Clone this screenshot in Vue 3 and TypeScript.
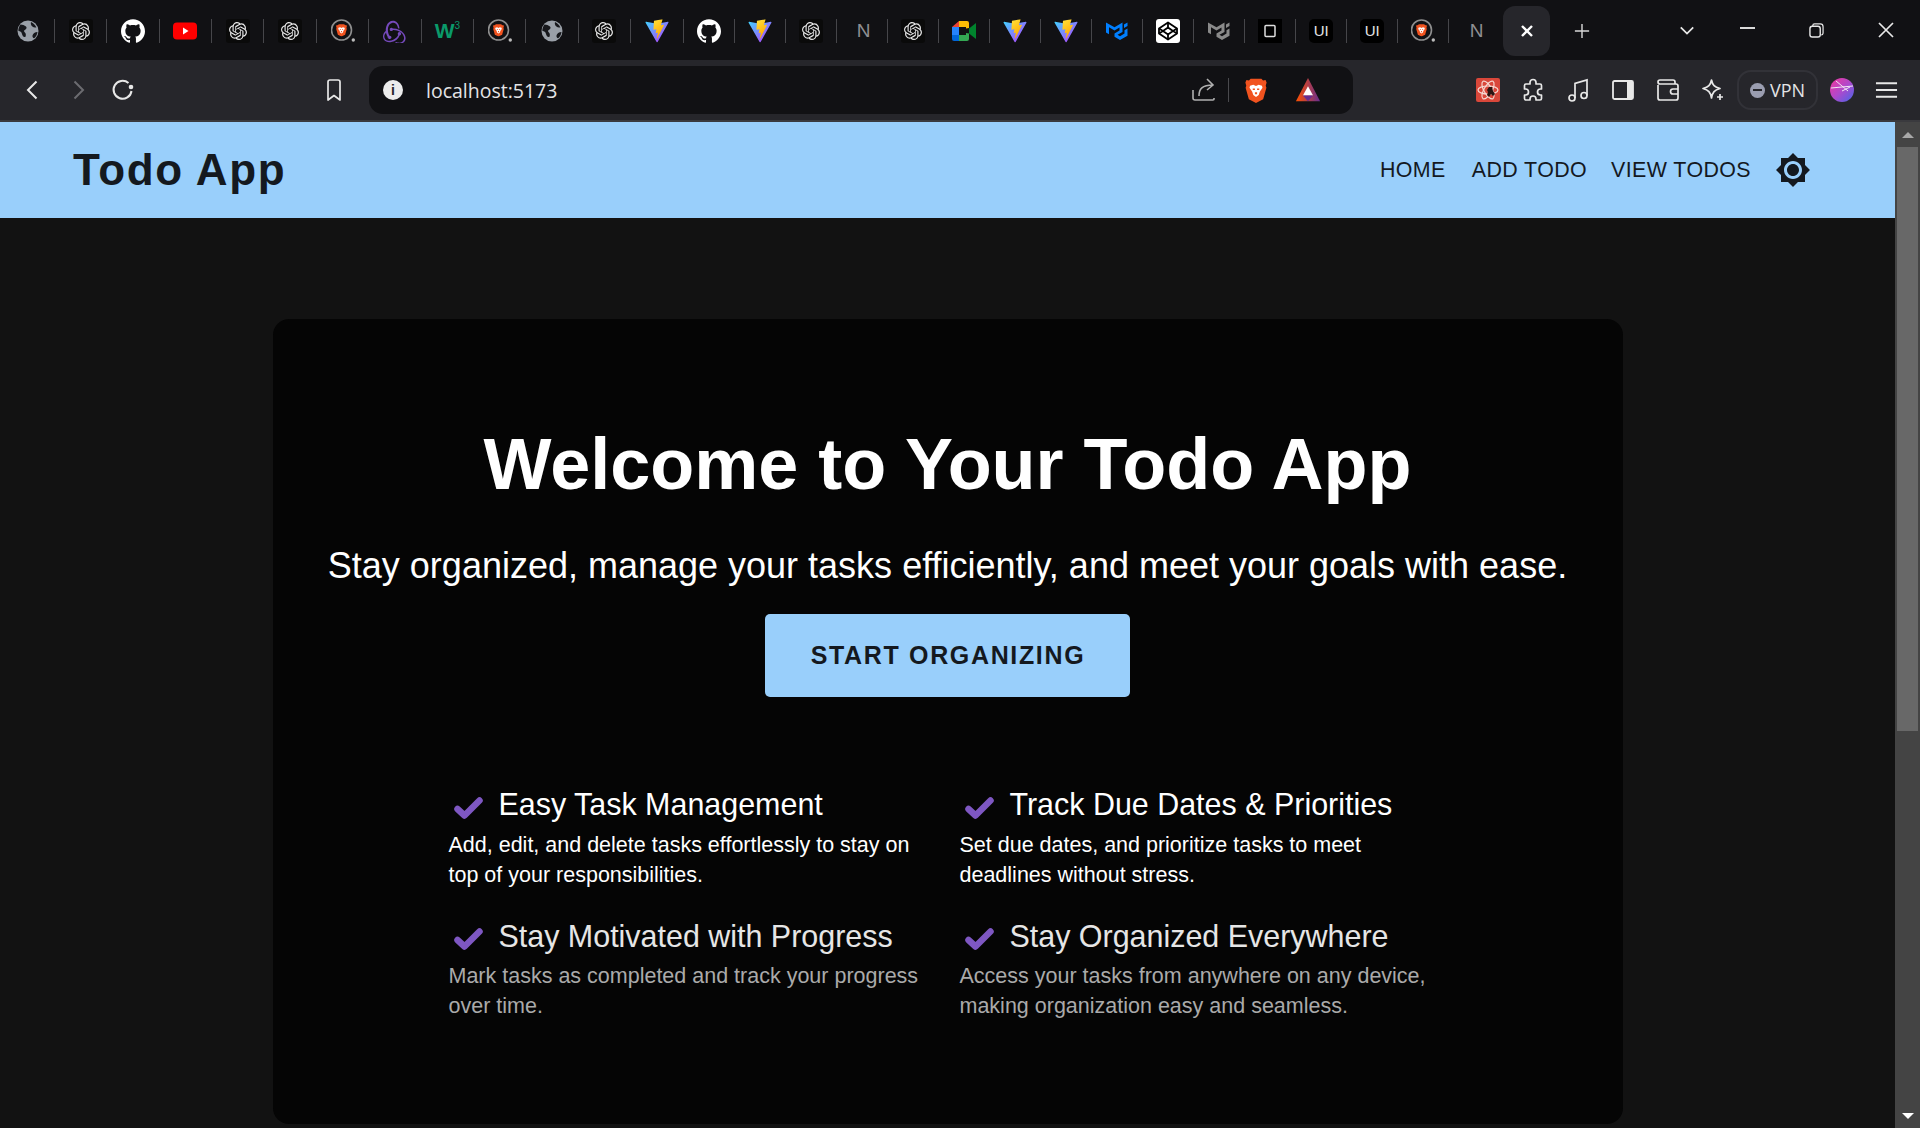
<script setup lang="ts">
type Tab = { kind: string; label?: string };

const icon = (kind: string): Tab => ({ kind });
const text = (label: string, kind = 'label'): Tab => ({ kind, label });

const tabs: Tab[] = [
  icon('globe'), icon('openai'), icon('github'), icon('youtube'), icon('openai'), icon('openai'),
  icon('brave-ring'), icon('redux'), text('W', 'w3'), icon('brave-ring'), icon('globe'), icon('openai'),
  icon('vite'), icon('github'), icon('vite'), icon('openai'), text('N'), icon('openai'),
  icon('meet'), icon('vite'), icon('vite'), icon('mui'), icon('box'), icon('mui-grey'),
  icon('square'), text('UI', 'ui'), text('UI', 'ui'), icon('brave-ring'), text('N'),
];

const navLinks = ['Home', 'Add Todo', 'View Todos'];

const features = [
  { title: 'Easy Task Management', desc: 'Add, edit, and delete tasks effortlessly to stay on top of your responsibilities.', dim: false },
  { title: 'Track Due Dates & Priorities', desc: 'Set due dates, and prioritize tasks to meet deadlines without stress.', dim: false },
  { title: 'Stay Motivated with Progress', desc: 'Mark tasks as completed and track your progress over time.', dim: true },
  { title: 'Stay Organized Everywhere', desc: 'Access your tasks from anywhere on any device, making organization easy and seamless.', dim: true },
];

const openaiPath = 'M22.2819 9.8211a5.9847 5.9847 0 0 0-.5157-4.9108 6.0462 6.0462 0 0 0-6.5098-2.9A6.0651 6.0651 0 0 0 4.9807 4.1818a5.9847 5.9847 0 0 0-3.9977 2.9 6.0462 6.0462 0 0 0 .7427 7.0966 5.98 5.98 0 0 0 .511 4.9107 6.051 6.051 0 0 0 6.5146 2.9001A5.9847 5.9847 0 0 0 13.2599 24a6.0557 6.0557 0 0 0 5.7718-4.2058 5.9894 5.9894 0 0 0 3.9977-2.9001 6.0557 6.0557 0 0 0-.7475-7.0729zm-9.022 12.6081a4.4755 4.4755 0 0 1-2.8764-1.0408l.1419-.0804 4.7783-2.7582a.7948.7948 0 0 0 .3927-.6813v-6.7369l2.02 1.1686a.071.071 0 0 1 .038.052v5.5826a4.504 4.504 0 0 1-4.4945 4.4944zm-9.6607-4.1254a4.4708 4.4708 0 0 1-.5346-3.0137l.142.0852 4.783 2.7582a.7712.7712 0 0 0 .7806 0l5.8428-3.3685v2.3324a.0804.0804 0 0 1-.0332.0615L9.74 19.9502a4.4992 4.4992 0 0 1-6.1408-1.6464zM2.3408 7.8956a4.485 4.485 0 0 1 2.3655-1.9728V11.6a.7664.7664 0 0 0 .3879.6765l5.8144 3.3543-2.0201 1.1685a.0757.0757 0 0 1-.071 0l-4.8303-2.7865A4.504 4.504 0 0 1 2.3408 7.872zm16.5963 3.8558L13.1038 8.364 15.1192 7.2a.0757.0757 0 0 1 .071 0l4.8303 2.7913a4.4944 4.4944 0 0 1-.6765 8.1042v-5.6772a.79.79 0 0 0-.407-.667zm2.0107-3.0231l-.142-.0852-4.7735-2.7818a.7759.7759 0 0 0-.7854 0L9.409 9.2297V6.8974a.0662.0662 0 0 1 .0284-.0615l4.8303-2.7866a4.4992 4.4992 0 0 1 6.6802 4.66zM8.3065 12.863l-2.02-1.1638a.0804.0804 0 0 1-.038-.0567V6.0742a4.4992 4.4992 0 0 1 7.3757-3.4537l-.142.0805L8.704 5.459a.7948.7948 0 0 0-.3927.6813zm1.0976-2.3654l2.602-1.4998 2.6069 1.4998v2.9994l-2.5974 1.4997-2.6067-1.4997Z';
const githubPath = 'M12 .297c-6.63 0-12 5.373-12 12 0 5.303 3.438 9.8 8.205 11.385.6.113.82-.258.82-.577 0-.285-.01-1.04-.015-2.04-3.338.724-4.042-1.61-4.042-1.61C4.422 18.07 3.633 17.7 3.633 17.7c-1.087-.744.084-.729.084-.729 1.205.084 1.838 1.236 1.838 1.236 1.07 1.835 2.809 1.305 3.495.998.108-.776.417-1.305.76-1.605-2.665-.3-5.466-1.332-5.466-5.93 0-1.31.465-2.38 1.235-3.22-.135-.303-.54-1.523.105-3.176 0 0 1.005-.322 3.3 1.23.96-.267 1.98-.399 3-.405 1.02.006 2.04.138 3 .405 2.28-1.552 3.285-1.23 3.285-1.23.645 1.653.24 2.873.12 3.176.765.84 1.23 1.91 1.23 3.22 0 4.61-2.805 5.625-5.475 5.92.42.36.81 1.096.81 2.22 0 1.606-.015 2.896-.03 3.286 0 .315.21.69.825.57C20.565 22.092 24 17.592 24 12.297c0-6.627-5.373-12-12-12';
const sunPath = 'M20 8.69V4h-4.69L12 .69 8.69 4H4v4.69L.69 12 4 15.31V20h4.69L12 23.31 15.31 20H20v-4.69L23.31 12 20 8.69zM12 18c-3.31 0-6-2.69-6-6s2.69-6 6-6 6 2.69 6 6-2.69 6-6 6zm0-10c-2.21 0-4 1.79-4 4s1.79 4 4 4 4-1.79 4-4-1.79-4-4-4z';
</script>

<template>
  <div class="window">
    <svg class="defs" aria-hidden="true">
      <defs>
        <linearGradient id="viteBody" x1="0" y1="0" x2="1" y2="1">
          <stop offset="0" stop-color="#41d1ff" />
          <stop offset="1" stop-color="#bd34fe" />
        </linearGradient>
        <linearGradient id="viteBolt" x1="0" y1="0" x2=".4" y2="1">
          <stop offset="0" stop-color="#ffea83" />
          <stop offset=".1" stop-color="#ffdd35" />
          <stop offset="1" stop-color="#ffa800" />
        </linearGradient>
        <linearGradient id="batBody" x1="0" y1="1" x2="1" y2="1">
          <stop offset="0" stop-color="#ff5000" />
          <stop offset="1" stop-color="#662d91" />
        </linearGradient>
        <linearGradient id="avatarBody" x1="0" y1="0" x2="1" y2="1">
          <stop offset="0" stop-color="#f2369a" />
          <stop offset=".5" stop-color="#b048cc" />
          <stop offset="1" stop-color="#4466e8" />
        </linearGradient>
        <symbol id="i-globe" viewBox="0 0 24 24">
          <circle cx="12" cy="12" r="10.5" fill="#9aa0a8" />
          <path d="M4.500 5.500c2 .3 4 .6 5.500 2 1.200 1.200 .4 2.600-.8 3.200-1.500 .6-1.400 2-.3 2.800 1 .8 1.200 2.400 .6 4.200-1.400 1.200-3-.6-3.600-3-.4-1.800-1.600-2.600-3.600-3 .1-2.400 1-4.600 2.200-6.200z" fill="#17181c" />
          <path d="M15 3c2.400 1 4.400 3 5.400 5.400-1.400 .4-3 .2-4-.8-1.200-1.200-2-2.800-1.400-4.600zM21.500 13c-.3 2.500-1.500 4.600-3.300 6.200-1.200-.3-2-1.400-1.700-2.800 .3-1.600 2.500-3.400 5-3.400z" fill="#17181c" />
        </symbol>
        <symbol id="i-lion" viewBox="0 0 24 24">
          <path d="M7 1.500h10l1.500 1.700 2.300-.5 1 2.300-.8 3 .6 2-3 10.500-6.600 3.500-6.600-3.500-3-10.500 .6-2-.8-3 1-2.300 2.300 .5z" fill="#f1531f" />
          <path d="M6.500 8l3-.8 2.500 1 2.500-1 3 .8 .5 2-2.500 3.500-1 3-2.500 2-2.500-2-1-3-2.500-3.500z" fill="#fff" />
          <path d="M9 10.500h2v1.500H9zM13 10.500h2v1.500h-2zM11 14h2v2h-2z" fill="#f1531f" />
        </symbol>
        <symbol id="i-vite" viewBox="0 0 410 404">
          <path d="M399.641 59.5246L215.643 388.545C211.844 395.338 202.084 395.378 198.228 388.618L10.5817 59.5563C6.38087 52.1896 12.6802 43.2665 21.0281 44.7586L205.223 77.6824C206.398 77.8924 207.601 77.8904 208.776 77.6763L389.119 44.8058C397.439 43.2894 403.768 52.1434 399.641 59.5246Z" fill="url(#viteBody)" />
          <path d="M292.965 1.5744L156.801 28.2552C154.563 28.6937 152.906 30.5903 152.771 32.8664L144.395 174.33C144.198 177.662 147.258 180.248 150.51 179.498L188.42 170.749C191.967 169.931 195.172 173.055 194.443 176.622L183.18 231.775C182.422 235.487 185.907 238.661 189.532 237.56L212.947 230.446C216.577 229.344 220.065 232.527 219.297 236.242L201.398 322.875C200.278 328.294 207.486 331.249 210.492 326.603L212.5 323.5L323.454 102.072C325.312 98.3645 322.108 94.1362 318.036 94.9221L279.014 102.454C275.347 103.161 272.227 99.746 273.262 96.1583L298.731 7.86689C299.767 4.27314 296.636 0.855181 292.965 1.5744Z" fill="url(#viteBolt)" />
        </symbol>
        <symbol id="i-redux" viewBox="0 0 24 24">
          <path d="M16.634 16.504c.87-.075 1.543-.84 1.5-1.754-.047-.914-.796-1.648-1.709-1.648h-.061a1.71 1.71 0 00-1.648 1.769c.03.479.226.869.494 1.153-1.048 2.038-2.621 3.536-5.005 4.795-1.603.838-3.296 1.154-4.944.93-1.378-.195-2.456-.81-3.116-1.799-.988-1.499-1.078-3.116-.255-4.734.6-1.17 1.499-2.023 2.099-2.443a9.96 9.96 0 01-.42-1.543C-.868 14.408-.416 18.752.947 20.805c1.019 1.543 3.146 2.517 5.494 2.517.629 0 1.273-.06 1.903-.21 4.059-.779 7.135-3.326 8.29-6.608zm3.746-2.622c-2.412-2.845-5.973-4.404-10.03-4.404h-.51c-.3-.479-.84-.81-1.41-.81h-.06c-.94 0-1.68.81-1.65 1.769.03.9.81 1.65 1.71 1.65h.06a1.72 1.72 0 001.5-1.051h.569c2.411 0 4.704.689 6.767 2.068 1.573 1.05 2.712 2.428 3.342 4.106.54 1.35.51 2.67-.06 3.79-.9 1.71-2.4 2.65-4.378 2.65-1.26 0-2.47-.39-3.09-.66-.36.3-.96.81-1.38 1.11 1.37.63 2.77 1 4.11 1 3.06 0 5.33-1.7 6.19-3.4.93-1.86.87-5.04-1.68-7.82zM5.08 18.38c.03.9.81 1.65 1.71 1.65h.06c.93-.03 1.65-.81 1.62-1.74-.03-.9-.81-1.65-1.71-1.65h-.06c-.06 0-.15 0-.21.03-1.23-2.04-1.74-4.26-1.56-6.66.12-1.8.72-3.36 1.77-4.65.87-1.11 2.55-1.65 3.69-1.68 3.18-.06 4.53 3.9 4.62 5.49.39.09 1.05.3 1.5.45C16.14 4.29 13 1.8 9.97 1.8c-2.85 0-5.46 2.07-6.51 5.1-1.47 4.05-.51 7.95 1.29 11.04-.15.21-.24.54-.21.84z" fill="#764abc" />
        </symbol>
        <symbol id="i-mui" viewBox="0 0 24 24">
          <path d="M1 3.500v10l3 1.800V8.200l5.500 3.200 5-3v3.200l-5 3v3.200l5.500 3.200 7.500-4.300V9.600l-3 1.700v3.300l-4.500 2.600-2.500-1.400 5-2.900V3.500l-8 4.700z" fill="currentColor" />
          <path d="M19 5.500v3.400l3.500-2V3.500z" fill="currentColor" />
        </symbol>
      </defs>
    </svg>

    <div class="tabstrip">
      <div v-for="(tab, i) in tabs" :key="i" class="tab" :class="{ first: i < 12, bridge: i === 12 }">
        <span class="tab-icon">
          <span v-if="tab.kind === 'label'" class="tab-n">{{ tab.label }}</span>
          <span v-else-if="tab.kind === 'ui'" class="tab-ui">{{ tab.label }}</span>
          <span v-else-if="tab.kind === 'w3'" class="tab-w3">{{ tab.label }}<sup>3</sup></span>
          <svg v-else-if="tab.kind === 'globe'" viewBox="0 0 24 24"><use href="#i-globe" /></svg>
          <svg v-else-if="tab.kind === 'openai'" class="ai" viewBox="-4 -4 32 32"><path :d="openaiPath" fill="#e6e6e6" /></svg>
          <svg v-else-if="tab.kind === 'github'" viewBox="0 0 24 24"><path :d="githubPath" fill="#fff" /></svg>
          <svg v-else-if="tab.kind === 'youtube'" viewBox="0 0 24 24">
            <rect x="0" y="3.500" width="24" height="17" rx="4" fill="#f00" />
            <path d="M10 8.500v7l5.500-3.500z" fill="#fff" />
          </svg>
          <svg v-else-if="tab.kind === 'brave-ring'" viewBox="0 0 24 24">
            <circle cx="10.500" cy="11" r="10" fill="none" stroke="#8f8f8f" stroke-width="1.600" />
            <g transform="translate(3.900 4.400) scale(.55)"><use href="#i-lion" width="24" height="24" /></g>
            <circle cx="22.300" cy="21" r="1.700" fill="#bbb" />
          </svg>
          <svg v-else-if="tab.kind === 'redux'" viewBox="0 0 24 24"><use href="#i-redux" /></svg>
          <svg v-else-if="tab.kind === 'vite'" viewBox="0 0 410 404"><use href="#i-vite" /></svg>
          <svg v-else-if="tab.kind === 'meet'" viewBox="0 0 24 24">
            <path d="M0 8 7 2v6z" fill="#ea4335" />
            <path d="M7 2h8a2 2 0 0 1 2 2v5l-3 .5V8H7z" fill="#fbbc05" />
            <path d="M0 8h7v8H0z" fill="#2684fc" />
            <path d="M0 16h7v6H2a2 2 0 0 1-2-2z" fill="#0066da" />
            <path d="M7 16h7v-2l3 .5V20a2 2 0 0 1-2 2H7z" fill="#34a853" />
            <path d="M17 9.500 24 4v16l-7-5.500z" fill="#00832d" />
          </svg>
          <svg v-else-if="tab.kind === 'mui'" class="mui" viewBox="0 0 24 24"><use href="#i-mui" /></svg>
          <svg v-else-if="tab.kind === 'mui-grey'" class="mui grey" viewBox="0 0 24 24"><use href="#i-mui" /></svg>
          <svg v-else-if="tab.kind === 'box'" viewBox="0 0 24 24">
            <rect width="24" height="24" rx="3" fill="#fff" />
            <g fill="none" stroke="#000" stroke-width="1.800" stroke-linejoin="round">
              <path d="M12 3.500 21 9.500v5L12 20.500 3 14.500v-5z" />
              <path d="M12 8.500 17 12l-5 3.500L7 12z" />
              <path d="M12 3.500v5M12 15.500v5M3 9.500 7 12M21 9.500 17 12M3 14.500 7 12M21 14.500 17 12" />
            </g>
          </svg>
          <svg v-else-if="tab.kind === 'square'" viewBox="0 0 24 24">
            <rect width="24" height="24" fill="#000" />
            <rect x="7" y="6.500" width="10" height="11" rx="1" fill="none" stroke="#ddd" stroke-width="1.500" />
          </svg>
        </span>
      </div>
      <div class="tab-active">
        <svg viewBox="0 0 14 14" class="close-x"><path d="M2 2l10 10M12 2 2 12" stroke="#fff" stroke-width="2.400" /></svg>
      </div>
      <svg class="new-tab" viewBox="0 0 18 18"><path d="M9 1v16M1 9h16" stroke="#d8d8d8" stroke-width="1.600" /></svg>
      <div class="window-controls">
        <svg class="wc chevron" viewBox="0 0 18 12"><path d="M2 2.500l7 7 7-7" fill="none" stroke="#e8e8e8" stroke-width="2" /></svg>
        <svg class="wc minimize" viewBox="0 0 16 4"><path d="M0 2h16" stroke="#e8e8e8" stroke-width="2" /></svg>
        <svg class="wc restore" viewBox="0 0 16 16"><path d="M4 3.500V3a2 2 0 0 1 2-2h6a3 3 0 0 1 3 3v7a2 2 0 0 1-2 1.800" fill="none" stroke="#e8e8e8" stroke-width="1.300" /><rect x="1" y="3.500" width="11" height="11.500" rx="2.500" fill="none" stroke="#e8e8e8" stroke-width="1.500" /></svg>
        <svg class="wc closer" viewBox="0 0 16 16"><path d="M1 1l14 14M15 1 1 15" stroke="#e8e8e8" stroke-width="1.700" /></svg>
      </div>
    </div>

    <div class="toolbar">
      <svg class="tb back" viewBox="0 0 24 24"><path d="M15.500 3.500 7 12l8.500 8.500" fill="none" stroke="#e8e8e8" stroke-width="2" /></svg>
      <svg class="tb forward" viewBox="0 0 24 24"><path d="M8.500 3.500 17 12l-8.500 8.500" fill="none" stroke="#6b6b70" stroke-width="2" /></svg>
      <svg class="tb reload" viewBox="0 0 24 24"><path d="M20.500 13a9 9 0 1 1-3-8" fill="none" stroke="#e8e8e8" stroke-width="2" /><circle cx="20" cy="9" r="2.300" fill="#e8e8e8" /></svg>
      <svg class="tb bookmark" viewBox="0 0 24 24"><path d="M6 4a2 2 0 0 1 2-2h8a2 2 0 0 1 2 2v18l-6-4.500L6 22z" fill="none" stroke="#e8e8e8" stroke-width="1.700" stroke-linejoin="round" /></svg>
      <div class="omnibox">
        <span class="info">i</span>
        <span class="url">localhost:5173</span>
        <svg class="omni-ic share" viewBox="0 0 24 24"><path d="M2 12v8a2 2 0 0 0 2 2h18a1 1 0 0 0 1-1v-1M8 18c0-7 3-11 14-11M16 1l6 6-6 5" fill="none" stroke="#b0b0b0" stroke-width="1.600" /></svg>
        <span class="omni-div"></span>
        <svg class="omni-ic lion" viewBox="0 0 24 24"><use href="#i-lion" /></svg>
        <svg class="omni-ic bat" viewBox="0 0 28 28">
          <path d="M14 1 27 26H1z" fill="url(#batBody)" />
          <path d="M14 10l5.500 10h-11z" fill="#fff" />
          <path d="M8.500 20h11L14 26z" fill="#662d91" />
        </svg>
      </div>
      <div class="ext-row">
        <span class="ext-btn">
          <svg viewBox="0 0 24 24">
            <rect width="24" height="24" rx="2" fill="#d9473a" />
            <g fill="none" stroke="#f6d9d2" stroke-width="1.200">
              <ellipse cx="12" cy="12" rx="10" ry="4" />
              <ellipse cx="12" cy="12" rx="10" ry="4" transform="rotate(60 12 12)" />
              <ellipse cx="12" cy="12" rx="10" ry="4" transform="rotate(120 12 12)" />
            </g>
            <path d="M13 9h3l1 4 2 3-2 2-2-2-2 3-2-2 1-3-1-2z" fill="#2b1512" />
          </svg>
        </span>
        <span class="ext-btn">
          <svg viewBox="0 0 24 24"><path d="M9 4.500a3 3 0 0 1 6 0V6h4a1.500 1.500 0 0 1 1.500 1.500V11h-1a3 3 0 0 0 0 6h1v3.500A1.500 1.500 0 0 1 19 22h-4v-1a3 3 0 0 0-6 0v1H5a1.500 1.500 0 0 1-1.500-1.500V17h1a3 3 0 0 0 0-6h-1V7.500A1.500 1.500 0 0 1 5 6h4z" fill="none" stroke="#e8e8e8" stroke-width="1.700" stroke-linejoin="round" /></svg>
        </span>
        <span class="ext-btn">
          <svg viewBox="0 0 24 24"><g fill="none" stroke="#e8e8e8" stroke-width="1.700"><circle cx="6" cy="20" r="3" /><circle cx="18" cy="17.500" r="3" /><path d="M9 20V5.500L21 2v15.500" /></g></svg>
        </span>
        <span class="ext-btn">
          <svg viewBox="0 0 24 24"><rect x="2" y="3" width="20" height="18" rx="1.500" fill="none" stroke="#e8e8e8" stroke-width="1.800" /><rect x="16" y="3" width="6" height="18" fill="#e8e8e8" /></svg>
        </span>
        <span class="ext-btn">
          <svg viewBox="0 0 24 24"><g fill="none" stroke="#e8e8e8" stroke-width="1.700"><path d="M2 7v13a2 2 0 0 0 2 2h16a2 2 0 0 0 2-2V8a2 2 0 0 0-2-2H4a2 2 0 0 1-2-2 2 2 0 0 1 2-2h13a2 2 0 0 1 2 2v2" /><path d="M22 11h-5a2.500 2.500 0 0 0 0 5h5" /></g></svg>
        </span>
        <span class="ext-btn">
          <svg viewBox="0 0 24 24"><path d="M10.500 2c1 5 3 7 8.500 8.500-5.500 1.500-7.500 3.500-8.500 9.500-1-6-3-8-8.500-9.500C7.500 9 9.500 7 10.500 2z" fill="none" stroke="#e8e8e8" stroke-width="1.700" stroke-linejoin="round" /><path d="M19 16v6M16 19h6" stroke="#e8e8e8" stroke-width="1.700" /></svg>
        </span>
      </div>
      <div class="vpn"><span class="vpn-dot"><i></i></span>VPN</div>
      <svg class="avatar" viewBox="0 0 24 24">
        <circle cx="12" cy="12" r="12" fill="url(#avatarBody)" />
        <path d="M1 10l22-2M6 3l12 10M20 9l-8 4" stroke="#f3e6f5" stroke-width="1" fill="none" />
      </svg>
      <svg class="menu" viewBox="0 0 24 20"><path d="M1 3h22M1 10h22M1 17h22" stroke="#e8e8e8" stroke-width="2" /></svg>
    </div>
    <div class="chrome-line"></div>

    <div class="viewport">
      <main class="page">
        <header class="app-bar">
          <div class="logo">Todo App</div>
          <nav class="nav">
            <a v-for="link in navLinks" :key="link" class="nav-link">{{ link }}</a>
            <svg class="sun" viewBox="0 0 24 24"><path :d="sunPath" fill="#14191f" /></svg>
          </nav>
        </header>
        <section class="hero">
          <h1 class="hero-title">Welcome to Your Todo App</h1>
          <p class="hero-sub">Stay organized, manage your tasks efficiently, and meet your goals with ease.</p>
          <button class="cta" type="button">Start Organizing</button>
          <div class="features">
            <div v-for="f in features" :key="f.title" class="feature" :class="{ dim: f.dim }">
              <div class="feature-head">
                <svg class="check" viewBox="0 0 29 22"><path d="M3.500 12 10.500 18.500 25.500 3.500" fill="none" stroke="#7e57c2" stroke-width="6.500" stroke-linecap="round" stroke-linejoin="round" /></svg>
                <span class="feature-title">{{ f.title }}</span>
              </div>
              <p class="feature-desc">{{ f.desc }}</p>
            </div>
          </div>
        </section>
      </main>
      <aside class="scrollbar">
        <span class="arrow up"></span>
        <span class="thumb"></span>
        <span class="arrow down"></span>
      </aside>
    </div>
  </div>
</template>

<style>
html, body { margin: 0; background: #121212; }
</style>

<style scoped>
.window {
  width: 1920px;
  height: 1128px;
  display: flex;
  flex-direction: column;
  overflow: hidden;
  background: #121212;
  font-family: "Liberation Sans", Arial, sans-serif;
}
.defs { width: 0; height: 0; position: absolute; }

.tabstrip {
  height: 60px;
  flex: none;
  display: flex;
  align-items: center;
  padding-left: 2.500px;
  background: #111114;
}
.tab {
  width: 51px;
  height: 24px;
  flex: none;
  box-sizing: border-box;
  border-right: 1px solid #46464a;
  display: flex;
  align-items: center;
  justify-content: center;
  margin-top: 2px;
}
.tab.first { width: 52.400px; }
.tab.bridge { width: 53px; }
.tab:nth-child(29) { border-right: none; width: 52px; }
.tab-icon {
  width: 24px;
  height: 24px;
  display: flex;
  align-items: center;
  justify-content: center;
}
.tab-icon svg { width: 24px; height: 24px; display: block; }
.tab-icon svg.ai { background: #0a0a0a; border-radius: 3px; }
.tab-icon svg.mui { color: #007fff; }
.tab-icon svg.mui.grey { color: #8a8a8a; }
.tab-n {
  color: #8f8f92;
  font-size: 19px;
  width: 14px;
  margin-left: 3px;
  overflow: hidden;
  font-family: "Liberation Sans", sans-serif;
}
.tab-ui {
  width: 24px;
  height: 24px;
  background: #000;
  border-radius: 5px;
  color: #e4e4e4;
  font-size: 15px;
  line-height: 24px;
  text-align: center;
}
.tab-w3 { color: #0a9a6a; font-weight: 700; font-size: 21px; line-height: 24px; letter-spacing: -1px; white-space: nowrap; }
.tab-w3 sup { font-size: 10px; font-weight: 400; vertical-align: 9px; line-height: 0; letter-spacing: 0; margin-left: 1px; }
.tab-active {
  width: 47px;
  height: 50px;
  flex: none;
  margin: 2px 0 0 2px;
  border-radius: 12px;
  background: #26262b;
  display: flex;
  align-items: center;
  justify-content: center;
}
.close-x { width: 14px; height: 14px; }
.new-tab { width: 16px; height: 16px; margin-left: 24px; flex: none; margin-top: 2px; }
.window-controls { flex: 1; display: flex; align-items: center; }
.wc { flex: none; }
.chevron { width: 16px; height: 11px; margin-left: 89px; }
.minimize { width: 15px; height: 4px; margin-left: 45px; margin-top: -4px; }
.restore { width: 15px; height: 15px; margin-left: 54px; }
.closer { width: 16px; height: 16px; margin-left: 54px; }

.toolbar {
  height: 60px;
  flex: none;
  display: flex;
  align-items: center;
  background: #26262b;
}
.tb { flex: none; }
.back { width: 24px; height: 24px; margin-left: 21px; }
.forward { width: 24px; height: 24px; margin-left: 21px; }
.reload { width: 24px; height: 24px; margin-left: 21px; }
.bookmark { width: 24px; height: 24px; margin-left: 187px; }
.omnibox {
  width: 984px;
  height: 48px;
  margin-left: 23px;
  flex: none;
  border-radius: 14px;
  background: #111114;
  display: flex;
  align-items: center;
  padding-left: 14px;
  box-sizing: border-box;
}
.info {
  width: 20px;
  height: 20px;
  border-radius: 50%;
  background: #ececec;
  color: #26262b;
  font-size: 14px;
  font-weight: 700;
  line-height: 20px;
  text-align: center;
  flex: none;
}
.url {
  margin-left: 23px;
  color: #e4e4e6;
  font-family: "Open Sans", sans-serif;
  font-size: 19.500px;
  flex: 1;
}
.omni-ic { flex: none; }
.share { width: 24px; height: 24px; }
.omni-div { width: 1px; height: 24px; background: #4a4a4e; margin: 0 14px 0 13px; flex: none; }
.lion { width: 26px; height: 28px; }
.bat { width: 28px; height: 26px; margin: 0 31px 0 25px; }
.ext-row { display: flex; align-items: center; margin-left: 123px; gap: 21px; }
.ext-btn { width: 24px; height: 24px; display: block; flex: none; }
.ext-btn svg { width: 24px; height: 24px; display: block; }
.vpn {
  width: 81px;
  height: 40px;
  margin-left: 12px;
  flex: none;
  box-sizing: border-box;
  border: 2px solid #323238;
  border-radius: 14px;
  display: flex;
  align-items: center;
  justify-content: center;
  gap: 5px;
  color: #e4e4e6;
  font-size: 18px;
  font-family: "Open Sans", sans-serif;
}
.vpn-dot {
  width: 15px;
  height: 15px;
  border-radius: 50%;
  background: #9a9db0;
  display: flex;
  align-items: center;
  justify-content: center;
  flex: none;
}
.vpn-dot i { width: 9px; height: 2px; background: #26262b; display: block; }
.avatar { width: 24px; height: 24px; margin-left: 12px; flex: none; }
.menu { width: 23px; height: 20px; margin-left: 21px; flex: none; }
.chrome-line { height: 2px; flex: none; background: #3a3a3e; }

.viewport { flex: 1; display: flex; min-height: 0; }
.page { flex: 1; min-width: 0; display: flex; flex-direction: column; }
.app-bar {
  height: 96px;
  flex: none;
  box-sizing: border-box;
  padding: 0 84px 0 73px;
  background: #99cffb;
  display: flex;
  align-items: center;
  justify-content: space-between;
  color: #14191f;
}
.logo { font-size: 44px; font-weight: 700; letter-spacing: 1.600px; }
.nav { display: flex; align-items: center; }
.nav-link {
  font-size: 21.400px;
  text-transform: uppercase;
  letter-spacing: .4px;
  margin-right: 24px;
}
.nav-link:first-child { margin-right: 26px; }
.sun { width: 36px; height: 36px; display: block; }

.hero {
  width: 1350px;
  height: 805px;
  margin: 101px auto 0;
  flex: none;
  box-sizing: border-box;
  padding-top: 102.500px;
  border-radius: 16px;
  background: #050505;
  display: flex;
  flex-direction: column;
  align-items: center;
  color: #fff;
}
.hero-title { margin: 0; font-size: 72px; line-height: 84px; font-weight: 700; }
.hero-sub { margin: 38px 0 0; font-size: 36px; line-height: 44px; }
.cta {
  width: 365px;
  height: 83px;
  margin: 26px 1px 0 0;
  padding: 0 0 0 2px;
  border: none;
  border-radius: 5px;
  background: #99cffb;
  color: #14191f;
  font: 700 25px "Liberation Sans", Arial, sans-serif;
  letter-spacing: 1.650px;
  text-transform: uppercase;
}
.features {
  width: 1000px;
  margin-top: 86px;
  display: grid;
  grid-template-columns: 480px 489px;
  column-gap: 31px;
  row-gap: 24.500px;
}
.feature-head { display: flex; align-items: center; height: 44.500px; }
.check { width: 29px; height: 22px; margin: 6px 16px 0 6px; flex: none; }
.feature-title { font-size: 30.450px; color: #fff; }
.feature-desc { margin: 2.500px 0 0 1px; font-size: 21.500px; line-height: 30px; color: #fff; }
.dim .feature-title { color: #e6e6e6; }
.dim .feature-desc { color: #aaa; }

.scrollbar {
  width: 25px;
  flex: none;
  background: #444;
  display: flex;
  flex-direction: column;
  align-items: center;
  justify-content: flex-start;
}
.arrow { width: 0; height: 0; border-left: 6px solid transparent; border-right: 6px solid transparent; flex: none; }
.arrow.up { border-bottom: 6px solid #a8a8a8; margin-top: 10px; }
.thumb { width: 21px; height: 584px; background: #686868; margin-top: 9px; flex: none; }
.arrow.down { border-top: 6px solid #fff; margin-top: auto; margin-bottom: 9px; }
</style>
